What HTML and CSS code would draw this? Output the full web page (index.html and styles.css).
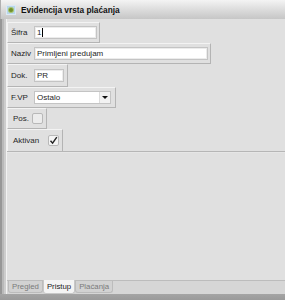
FILE: index.html
```html
<!DOCTYPE html>
<html lang="hr">
<head>
    <meta charset="UTF-8">
    <meta name="viewport" content="width=device-width, initial-scale=1.0">
    <title>Evidencija vrsta plaćanja</title>
    <link rel="stylesheet" href="styles.css">
</head>
<body>
    <div class="window">
        <div class="titlebar">
            <span class="app-icon"><span class="app-dot"></span></span>
            <span class="title">Evidencija vrsta plaćanja</span>
        </div>
        <div class="frame">
            <div class="frame-left"></div>
            <div class="content">
                <div class="fields">
                    <div class="row row-sifra">
                        <label>Šifra</label>
                        <div class="input w-sifra">1<span class="caret"></span></div>
                    </div>
                    <div class="row">
                        <label>Naziv</label>
                        <div class="input w-naziv">Primljeni predujam</div>
                    </div>
                    <div class="row row-dok">
                        <label>Dok.</label>
                        <div class="input w-dok">PR</div>
                    </div>
                    <div class="row">
                        <label>F.VP</label>
                        <div class="select">
                            <span class="select-value">Ostalo</span>
                            <span class="select-btn"><span class="arrow"></span></span>
                        </div>
                    </div>
                    <div class="row row-check">
                        <label class="check-label">Pos.</label>
                        <span class="checkbox"></span>
                    </div>
                    <div class="row row-check row-last">
                        <label class="check-label wide">Aktivan</label>
                        <span class="checkbox checked">
                            <svg width="9" height="9" viewBox="0 0 9 9"><path d="M1.5 4.8 L3.6 7.2 L7.8 1.2" fill="none" stroke="#222" stroke-width="1.4"/></svg>
                        </span>
                    </div>
                </div>
                <div class="filler"></div>
                <div class="tabs">
                    <span class="tab">Pregled</span>
                    <span class="tab active">Pristup</span>
                    <span class="tab">Plaćanja</span>
                </div>
            </div>
        </div>
        <div class="bottom-edge"></div>
    </div>
</body>
</html>
```

FILE: styles.css
```css
body {
    margin: 0;
    font-family: "Liberation Sans", Arial, sans-serif;
    font-size: 8px;
    color: #1e1e1e;
    background-color: #e0e0e0;
}
.window {
    width: 285px;
    height: 300px;
    display: flex;
    flex-direction: column;
    overflow: hidden;
}
.titlebar {
    height: 19px;
    flex: none;
    display: flex;
    align-items: center;
    padding-left: 5px;
    box-sizing: border-box;
    background: linear-gradient(#f4f4f4, #dadada 55%, #c6c6c6);
    border-left: 1px solid #b0b0b0;
}
.app-icon {
    width: 10px;
    height: 10px;
    margin-right: 5px;
    background: #b9d6ea;
    border: 1px solid #dbe9f3;
    box-sizing: border-box;
    display: flex;
    align-items: center;
    justify-content: center;
}
.app-dot {
    width: 4px;
    height: 4px;
    border-radius: 50%;
    background: #6f8f2c;
    box-shadow: 0 0 0 1px #a5c46a;
}
.title {
    font-weight: bold;
    font-size: 8.3px;
    color: #111;
}
.frame {
    flex: 1;
    display: flex;
    min-height: 0;
}
.frame-left {
    width: 6px;
    flex: none;
    background: linear-gradient(to right, #979797 0 2px, #b9b9b9 2px 4px, #cdcdcd 4px 6px);
}
.content {
    flex: 1;
    display: flex;
    flex-direction: column;
    background-color: #e0e0e0;
    border-left: 1px solid #f2f2f2;
}
.fields {
    padding-top: 3px;
    display: flex;
    flex-direction: column;
    align-items: flex-start;
    border-bottom: 1px solid #b6b6b6;
}
.row {
    height: 21px;
    box-sizing: border-box;
    display: flex;
    align-items: center;
    padding: 0 2px 0 3px;
    border: 1px solid;
    border-color: #f3f3f3 #b4b4b4 #b4b4b4 #f3f3f3;
}
.row-dok {
    height: 23px;
    padding-right: 3px;
}
.row-last {
    height: 22px;
    border-bottom: none;
}
.row label {
    width: 23px;
    flex: none;
}
.input {
    height: 13px;
    box-sizing: border-box;
    background: #fff;
    border: 1px solid #c4c4c4;
    box-shadow: inset 0 0 0 1px #ececec;
    padding-left: 2px;
    line-height: 11px;
    display: flex;
    align-items: center;
}
.w-sifra { width: 63px; }
.w-naziv { width: 174px; }
.w-dok { width: 30px; }
.caret {
    width: 1px;
    height: 9px;
    background: #000;
    margin-left: 1px;
}
.select {
    width: 77px;
    height: 13px;
    box-sizing: border-box;
    background: #fff;
    border: 1px solid #c4c4c4;
    display: flex;
    margin-right: 2px;
}
.select-value {
    flex: 1;
    padding-left: 2px;
    line-height: 11px;
}
.select-btn {
    width: 10px;
    background: #f2f2f2;
    border-left: 1px solid #dcdcdc;
    display: flex;
    align-items: center;
    justify-content: center;
}
.arrow {
    width: 0;
    height: 0;
    border-left: 3px solid transparent;
    border-right: 3px solid transparent;
    border-top: 3px solid #111;
}
.row-check {
    padding-left: 5px;
    padding-right: 3px;
}
.row .check-label {
    width: auto;
    margin-right: 3px;
    color: #2a2a2a;
}
.row .check-label.wide {
    margin-right: 9px;
}
.checkbox {
    width: 11px;
    height: 11px;
    box-sizing: border-box;
    border: 1px solid #b8b8b8;
    border-radius: 2px;
    background: #ececec;
    display: flex;
    align-items: center;
    justify-content: center;
}
.checkbox.checked {
    background: #f4f4f4;
}
.filler {
    flex: 1;
    border-top: 1px solid #e6e6e6;
}
.tabs {
    height: 14px;
    flex: none;
    box-sizing: border-box;
    border-top: 1px solid #bcbcbc;
    background: #d6d6d6;
    display: flex;
    align-items: stretch;
    padding-left: 1px;
}
.tab {
    font-size: 7.8px;
    color: #7a7a7a;
    padding: 0 3px;
    border: 1px solid #bcbcbc;
    border-top: none;
    border-radius: 0 0 3px 3px;
    background: #d2d2d2;
    display: flex;
    align-items: center;
    margin-bottom: 1px;
}
.tab.active {
    color: #222;
    background: #f4f4f4;
    margin-top: -1px;
    margin-bottom: 0;
    border-color: #c8c8c8;
}
.bottom-edge {
    height: 6px;
    flex: none;
    background: linear-gradient(#a4a4a4, #9a9a9a);
}
```
